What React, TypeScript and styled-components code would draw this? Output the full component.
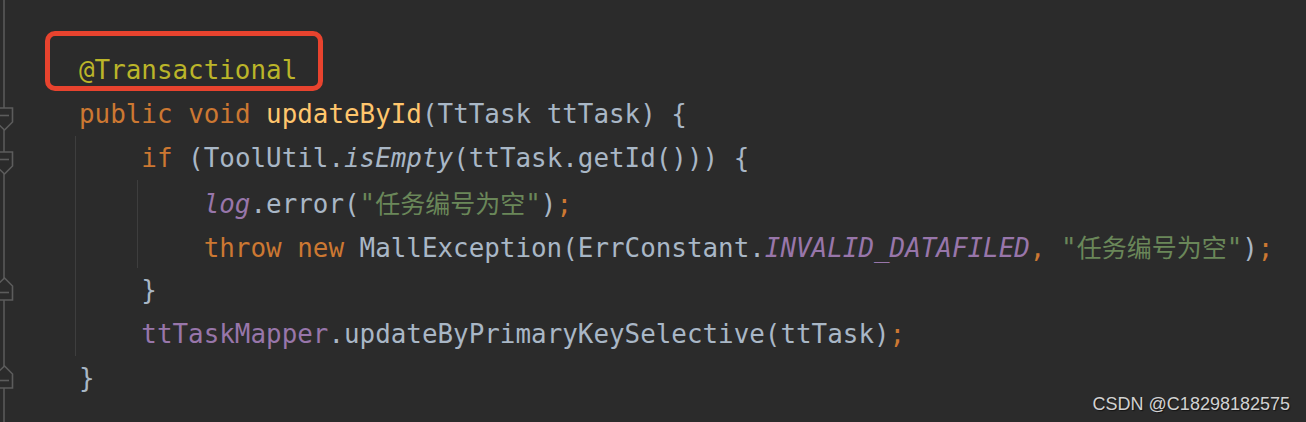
import React from "react";
import styled, { createGlobalStyle, css } from "styled-components";

const Global = createGlobalStyle`
  html, body { margin: 0; padding: 0; background: #2b2b2b; }
`;

const BG = "#2b2b2b";
const RAIL = "#4f4f4f";

const Page = styled.div`
  position: relative;
  width: 1306px;
  height: 422px;
  overflow: hidden;
  background-color: ${BG};
  background-image: linear-gradient(${RAIL}, ${RAIL});
  background-size: 2px 100%;
  background-position: 3px 0;
  background-repeat: no-repeat;
`;

const Editor = styled.div`
  display: flex;
  flex-direction: column;
  padding-top: 48px;
`;

const Line = styled.div`
  display: flex;
  height: 44px;
`;

const Gutter = styled.div`
  width: 79px;
  flex-shrink: 0;
`;

const MarkerSvg = styled.svg<{ $top: number }>`
  display: block;
  margin-top: ${(p) => p.$top}px;
`;

const Code = styled.div`
  display: flex;
  font-family: "DejaVu Sans Mono", "Liberation Mono", monospace;
  font-size: 25.9px;
  color: #a9b7c6;
`;

const Indent = styled.span<{ $guide: boolean }>`
  position: relative;
  width: 4ch;
  flex-shrink: 0;
  ${(p) =>
    p.$guide &&
    css`
      &::before {
        content: "";
        position: absolute;
        left: -4px;
        top: 0;
        bottom: 0;
        width: 1px;
        background: #3e3e3e;
      }
    `}
`;

const Text = styled.span`
  white-space: pre;
  line-height: 44px;
`;

type Kind = "kw" | "ann" | "fn" | "str" | "field" | "static" | "smethod" | "plain";

const colors: Record<Kind, string> = {
  kw: "#cc7832",
  ann: "#bbb529",
  fn: "#ffc66d",
  str: "#6a8759",
  field: "#9876aa",
  static: "#9876aa",
  smethod: "#a9b7c6",
  plain: "#a9b7c6",
};

const Tok = styled.span<{ $k: Kind }>`
  color: ${(p) => colors[p.$k]};
  font-style: ${(p) => (p.$k === "static" || p.$k === "smethod" ? "italic" : "normal")};
`;

const Cjk = styled.span`
  font-family: "Noto Sans CJK SC", sans-serif;
  font-size: 25px;
`;

const Highlight = styled.span`
  position: relative;
  display: inline-block;
  line-height: 44px;
  &::after {
    content: "";
    position: absolute;
    left: -34px;
    right: -26px;
    top: -17px;
    bottom: 1px;
    border: 5px solid #e8432e;
    border-radius: 10px;
  }
`;

const Watermark = styled.div`
  position: absolute;
  right: 16px;
  bottom: 7px;
  font-family: "Liberation Sans", Arial, sans-serif;
  font-size: 18px;
  color: #d2d2d2;
  text-shadow: 1px 1px 1px rgba(0, 0, 0, 0.55);
`;

const FoldMarker: React.FC<{ dir: "down" | "up" }> = ({ dir }) => {
  const stroke = "#5c5c5c";
  if (dir === "down") {
    return (
      <MarkerSvg $top={15} width={14} height={24} viewBox="0 0 14 24">
        <path d="M-4 1 H12.5 V15 L4.5 23 L-4 15 Z" fill={BG} stroke={stroke} strokeWidth={1.6} />
        <path d="M0 8.5 H9" stroke={stroke} strokeWidth={1.6} />
      </MarkerSvg>
    );
  }
  return (
    <MarkerSvg $top={9} width={14} height={24} viewBox="0 0 14 24">
      <path d="M-4 23 H12.5 V9 L4.5 1 L-4 9 Z" fill={BG} stroke={stroke} strokeWidth={1.6} />
      <path d="M0 15.5 H9" stroke={stroke} strokeWidth={1.6} />
    </MarkerSvg>
  );
};

const Str: React.FC<{ cjk: string }> = ({ cjk }) => (
  <Tok $k="str">
    "<Cjk>{cjk}</Cjk>"
  </Tok>
);

type Row = {
  guides: boolean[];
  marker?: "down" | "up";
  content: React.ReactNode;
};

const MSG = "任务编号为空";

const rows: Row[] = [
  {
    guides: [],
    content: (
      <Highlight>
        <Tok $k="ann">@Transactional</Tok>
      </Highlight>
    ),
  },
  {
    guides: [],
    marker: "down",
    content: (
      <>
        <Tok $k="kw">public</Tok> <Tok $k="kw">void</Tok> <Tok $k="fn">updateById</Tok>(TtTask ttTask) {"{"}
      </>
    ),
  },
  {
    guides: [true],
    marker: "down",
    content: (
      <>
        <Tok $k="kw">if</Tok> (ToolUtil.<Tok $k="smethod">isEmpty</Tok>(ttTask.getId())) {"{"}
      </>
    ),
  },
  {
    guides: [true, true],
    content: (
      <>
        <Tok $k="static">log</Tok>.error(<Str cjk={MSG} />)<Tok $k="kw">;</Tok>
      </>
    ),
  },
  {
    guides: [true, true],
    content: (
      <>
        <Tok $k="kw">throw</Tok> <Tok $k="kw">new</Tok> MallException(ErrConstant.
        <Tok $k="static">INVALID_DATAFILED</Tok>
        <Tok $k="kw">,</Tok> <Str cjk={MSG} />)<Tok $k="kw">;</Tok>
      </>
    ),
  },
  {
    guides: [true],
    marker: "up",
    content: <>{"}"}</>,
  },
  {
    guides: [true],
    content: (
      <>
        <Tok $k="field">ttTaskMapper</Tok>.updateByPrimaryKeySelective(ttTask)<Tok $k="kw">;</Tok>
      </>
    ),
  },
  {
    guides: [],
    marker: "up",
    content: <>{"}"}</>,
  },
];

export default function App() {
  return (
    <>
      <Global />
      <Page>
        <Editor>
          {rows.map((r, i) => (
            <Line key={i}>
              <Gutter>{r.marker && <FoldMarker dir={r.marker} />}</Gutter>
              <Code>
                {r.guides.map((g, j) => (
                  <Indent key={j} $guide={g} />
                ))}
                <Text>{r.content}</Text>
              </Code>
            </Line>
          ))}
        </Editor>
        <Watermark>CSDN @C18298182575</Watermark>
      </Page>
    </>
  );
}
